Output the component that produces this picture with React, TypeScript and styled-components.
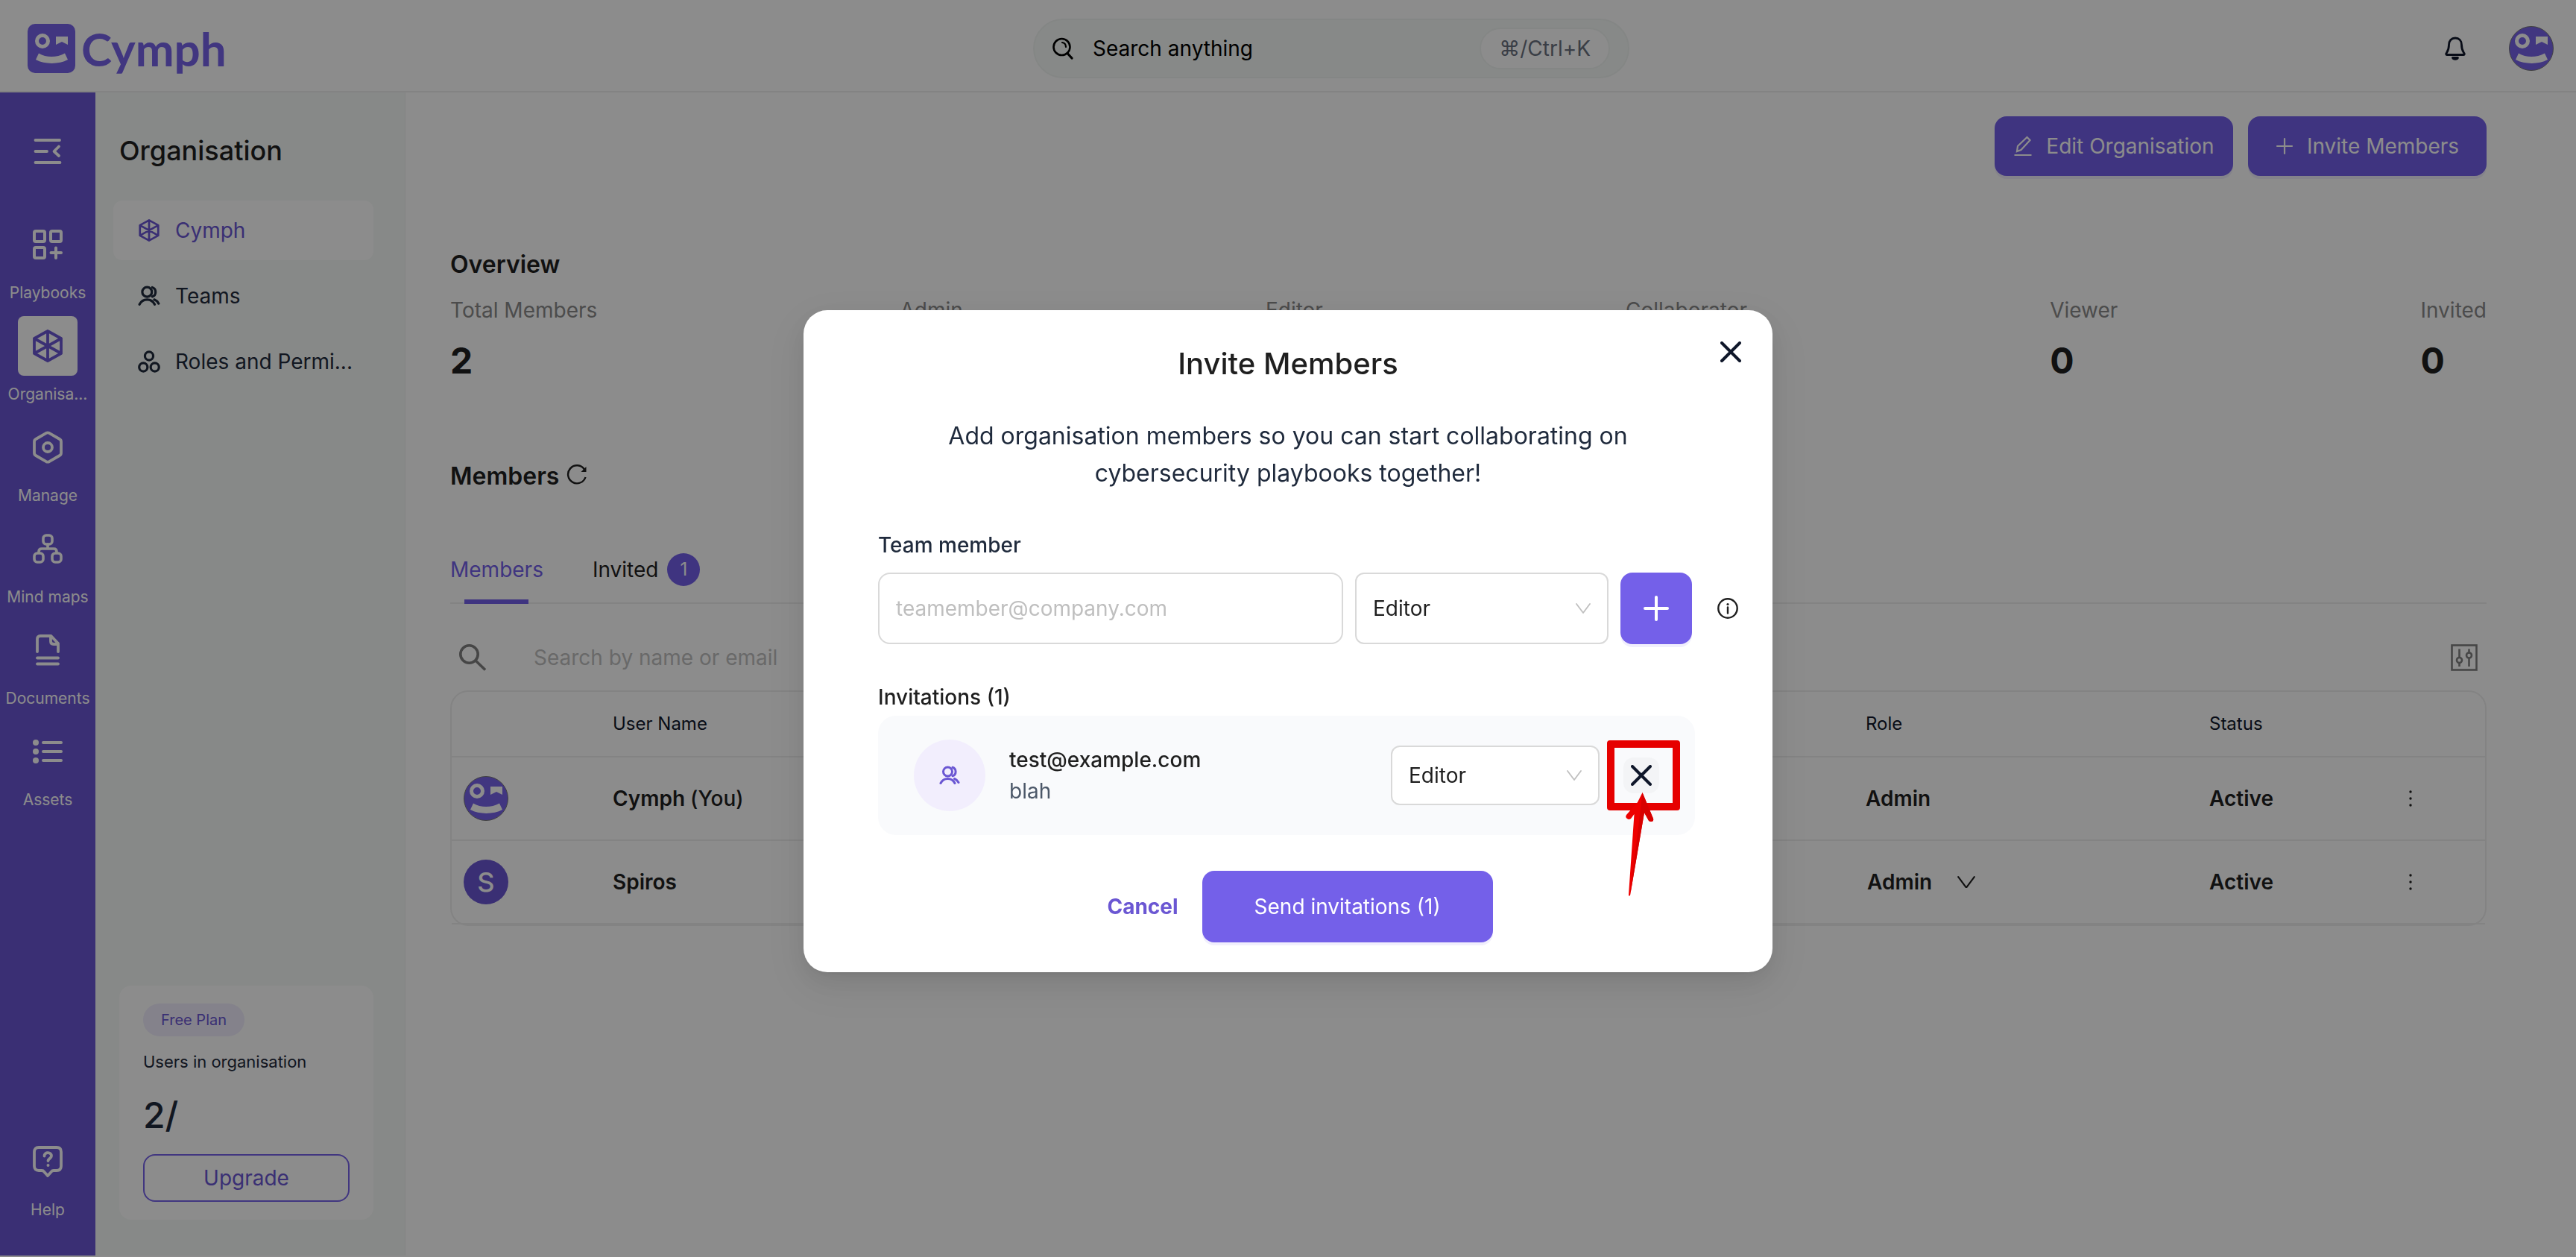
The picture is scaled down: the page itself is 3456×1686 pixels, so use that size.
import React from "react";
import styled, { createGlobalStyle } from "styled-components";

const color = {
  primary: "#7460e9",
  logo: "#7763e9",
  rail: "#6b57d3",
  ink: "#1f1f1f",
  navy: "#1f2a3c",
  deep: "#0f172a",
  muted: "#8a8a8a",
  line: "#efefef",
  field: "#d9d9d9",
  panel: "#f6faf7",
};

const GlobalStyle = createGlobalStyle`
  *, *::before, *::after { box-sizing: border-box; }
  body { margin: 0; background: #fff; }
  body, button, input, select {
    font-family: Inter, "Liberation Sans", sans-serif;
    font-size: 28px;
    line-height: 40px;
    color: ${color.ink};
  }
  h1, h2, h3, p, dl, dd, ul { margin: 0; padding: 0; font-weight: inherit; }
  ul { list-style: none; }
  button { border: 0; padding: 0; background: none; cursor: pointer; }
  a { color: inherit; text-decoration: none; }
  svg { display: block; flex: none; }
`;

/* ---------- shell ---------- */

const Shell = styled.div`
  display: flex;
  flex-direction: column;
  min-height: 100vh;
  padding-bottom: 2px;
`;

const Header = styled.header`
  display: flex;
  align-items: center;
  justify-content: space-between;
  height: 124px;
  padding: 8px 30px 0 37px;
  border-bottom: 2px solid ${color.line};
`;

const Brand = styled.a`
  display: flex;
  align-items: center;
  gap: 8px;
  min-width: 267px;
  color: ${color.logo};
  font-family: Lato, sans-serif;
  font-size: 62px;
  font-weight: 700;
  line-height: 66px;
`;

const SearchBox = styled.button`
  display: flex;
  align-items: center;
  width: 800px;
  height: 80px;
  padding: 0 24px;
  border: 2px solid #f1f5f3;
  border-radius: 40px;
  background: ${color.panel};
  color: #000;
  text-align: left;
`;

const SearchText = styled.span`
  flex: 1;
  padding-left: 26px;
`;

const Shortcut = styled.kbd`
  display: flex;
  align-items: center;
  height: 56px;
  padding: 0 24px;
  border: 2px solid #f1f5f3;
  border-radius: 28px;
  background: #fff;
  color: #6b7280;
  font-family: inherit;
`;

const HeaderTools = styled.div`
  display: flex;
  align-items: center;
  gap: 46px;
`;

const BellButton = styled.button`
  display: grid;
  place-items: center;
  width: 52px;
  height: 60px;
`;

const Body = styled.div`
  display: flex;
  flex: 1;
`;

/* ---------- rail ---------- */

const Rail = styled.nav`
  display: flex;
  flex-direction: column;
  align-items: center;
  width: 128px;
  padding: 39px 0 30px;
  background: ${color.rail};
  color: #fff;
`;

const RailToggle = styled.button`
  display: grid;
  place-items: center;
  width: 80px;
  height: 80px;
  margin-bottom: 45px;
  color: #fff;
`;

const RailLink = styled.a<{ $last?: boolean }>`
  display: flex;
  flex-direction: column;
  align-items: center;
  height: 136px;
  margin-top: ${(p) => (p.$last ? "auto" : 0)};
  font-size: 21px;
  line-height: 50px;
  white-space: nowrap;
`;

const RailIcon = styled.span<{ $active?: boolean }>`
  display: grid;
  place-items: center;
  width: 80px;
  height: 80px;
  border-radius: 8px;
  background: ${(p) => (p.$active ? "#fff" : "transparent")};
  color: ${(p) => (p.$active ? color.rail : "#fff")};
`;

/* ---------- side panel ---------- */

const Panel = styled.aside`
  display: flex;
  flex-direction: column;
  width: 416px;
  padding: 54px 42px 48px 24px;
  border-right: 1px solid #f0f0f0;
  background: ${color.panel};
`;

const PanelTitle = styled.h1`
  padding-left: 8px;
  margin-bottom: 43px;
  font-size: 36px;
  font-weight: 500;
  line-height: 48px;
`;

const PanelMenu = styled.ul`
  display: flex;
  flex-direction: column;
  gap: 8px;
`;

const PanelLink = styled.a<{ $active?: boolean }>`
  display: flex;
  align-items: center;
  gap: 20px;
  height: 80px;
  padding: 0 0 0 33px;
  border-radius: 12px;
  background: ${(p) => (p.$active ? "#fff" : "transparent")};
  color: ${(p) => (p.$active ? color.rail : color.navy)};
  white-space: nowrap;
`;

const PlanCard = styled.section`
  display: flex;
  flex-direction: column;
  align-items: flex-start;
  margin: auto 0 0 8px;
  padding: 24px 32px;
  border-radius: 16px;
  background: #fff;
  color: ${color.navy};
`;

const PlanBadge = styled.span`
  padding: 0 24px;
  border-radius: 22px;
  background: #f0edfd;
  color: ${color.rail};
  font-size: 20px;
  line-height: 44px;
`;

const PlanText = styled.p`
  margin-top: 14px;
  font-size: 22px;
`;

const PlanCount = styled.p`
  margin: 22px 0;
  font-size: 48px;
  font-weight: 500;
  line-height: 60px;
`;

const UpgradeButton = styled.button`
  width: 100%;
  height: 64px;
  border: 2px solid ${color.logo};
  border-radius: 16px;
  color: ${color.rail};
`;

/* ---------- main ---------- */

const Main = styled.main`
  flex: 1;
  padding: 32px 120px 0 60px;
`;

const Actions = styled.div`
  display: flex;
  justify-content: flex-end;
  gap: 20px;
`;

const PrimaryButton = styled.button<{ $width: number; $height: number }>`
  display: flex;
  align-items: center;
  justify-content: center;
  gap: 18px;
  width: ${(p) => p.$width}px;
  height: ${(p) => p.$height}px;
  border-radius: 16px;
  background: ${color.primary};
  box-shadow: 0 4px 0 rgba(116, 96, 233, 0.1);
  color: #fff;
  white-space: nowrap;
`;

const SectionTitle = styled.h2`
  display: flex;
  align-items: center;
  gap: 10px;
  font-size: 32px;
  font-weight: 600;
`;

const Overview = styled.section`
  margin-top: 99px;
`;

const Stats = styled.dl`
  display: flex;
  justify-content: space-between;
  margin-top: 21px;
`;

const StatLabel = styled.dt`
  color: ${color.muted};
`;

const StatValue = styled.dd`
  margin-top: 18px;
  font-size: 48px;
  font-weight: 700;
  line-height: 60px;
`;

const Members = styled.section`
  margin-top: 105px;
`;

const Tabs = styled.div`
  display: flex;
  gap: 66px;
  margin-top: 83px;
  box-shadow: inset 0 -2px 0 ${color.line};
`;

const Tab = styled.button<{ $active?: boolean }>`
  display: flex;
  flex-direction: column;
  align-items: center;
  gap: 18px;
  color: ${(p) => (p.$active ? color.primary : color.ink)};
  &::after {
    content: "";
    width: 86px;
    height: 6px;
    background: ${(p) => (p.$active ? color.primary : "transparent")};
  }
`;

const TabLabel = styled.span`
  display: flex;
  align-items: center;
  gap: 12px;
  height: 44px;
`;

const TabCount = styled.span`
  width: 44px;
  border-radius: 22px;
  background: ${color.primary};
  color: #fff;
  font-size: 24px;
  line-height: 44px;
`;

const Toolbar = styled.div`
  display: flex;
  align-items: center;
  margin-top: 52px;
  padding: 0 12px;
  color: #808080;
`;

const TableSearch = styled.input`
  flex: 1;
  height: 40px;
  padding: 0;
  margin: 0 64px;
  border: 0;
  background: none;
  &::placeholder { color: #bfbfbf; opacity: 1; }
`;

const IconButton = styled.button`
  color: inherit;
`;

const TableFrame = styled.div`
  margin-top: 24px;
  border: 2px solid ${color.line};
  border-radius: 24px;
`;

const Table = styled.table`
  width: 100%;
  table-layout: fixed;
  border-collapse: separate;
  border-spacing: 0;
`;

const Col = styled.col<{ $width?: number }>`
  width: ${(p) => (p.$width ? `${p.$width}px` : "auto")};
`;

const HeadCell = styled.th`
  height: 88px;
  padding: 0 16px;
  border-bottom: 2px solid ${color.line};
  color: ${color.deep};
  font-size: 24px;
  font-weight: 400;
  text-align: left;
`;

const Cell = styled.td`
  height: 112px;
  padding: 0 16px;
  border-bottom: 2px solid ${color.line};
  font-weight: 600;
`;

const Light = styled.span`
  font-weight: 500;
`;

const RoleMenu = styled.button`
  display: flex;
  align-items: center;
  gap: 34px;
  padding-left: 2px;
  font-weight: 600;
`;

const MoreButton = styled.button`
  display: block;
  margin: 0 auto;
`;

const Initial = styled.span`
  display: block;
  width: 60px;
  border-radius: 50%;
  background: ${color.rail};
  color: #fff;
  font-size: 36px;
  font-weight: 500;
  line-height: 60px;
  text-align: center;
`;

/* ---------- dialog ---------- */

const Backdrop = styled.div`
  position: fixed;
  inset: 0;
  display: flex;
  justify-content: center;
  align-items: flex-start;
  padding-top: 416px;
  background: rgba(0, 0, 0, 0.45);
`;

const Dialog = styled.div`
  position: relative;
  width: 1300px;
  max-width: 100%;
  padding: 48px 46px 40px 100px;
  border-radius: 32px;
  background: #fff;
  box-shadow: 0 12px 32px rgba(0, 0, 0, 0.08), 0 6px 12px -8px rgba(0, 0, 0, 0.12),
    0 18px 56px 16px rgba(0, 0, 0, 0.05);
`;

const DialogClose = styled.button`
  position: absolute;
  top: 42px;
  right: 42px;
`;

const DialogIntro = styled.div`
  padding-right: 54px;
  text-align: center;
`;

const DialogTitle = styled.h2`
  font-size: 40px;
  font-weight: 500;
  line-height: 48px;
`;

const DialogText = styled.p`
  max-width: 940px;
  margin: 48px auto 51px;
  color: ${color.navy};
  font-size: 32px;
  line-height: 50px;
`;

const FieldLabel = styled.label`
  display: block;
  margin-bottom: 17px;
  color: ${color.navy};
  font-weight: 500;
`;

const InviteRow = styled.div`
  display: flex;
  align-items: center;
  gap: 16px;
`;

const EmailInput = styled.input`
  flex: 1;
  min-width: 0;
  height: 96px;
  padding: 0 22px;
  border: 2px solid ${color.field};
  border-radius: 16px;
  &::placeholder { color: #bfbfbf; opacity: 1; }
`;

const SelectBox = styled.span<{ $width: number; $height: number }>`
  display: grid;
  align-items: center;
  width: ${(p) => p.$width}px;
  height: ${(p) => p.$height}px;
  & > * { grid-area: 1 / 1; }
  & > svg { justify-self: end; margin-right: 24px; pointer-events: none; }
`;

const Select = styled.select`
  width: 100%;
  height: 100%;
  padding: 0 22px;
  border: 2px solid ${color.field};
  border-radius: 12px;
  background: #fff;
  appearance: none;
`;

const InfoButton = styled.button`
  margin-left: 18px;
`;

const ListTitle = styled.h3`
  margin: 51px 0 5px;
  font-size: 28px;
  font-weight: 500;
`;

const InviteItem = styled.li`
  display: flex;
  align-items: center;
  margin-right: 58px;
  padding: 32px 48px;
  border-radius: 24px;
  background: #f9fafc;
`;

const InviteAvatar = styled.span`
  display: grid;
  place-items: center;
  width: 96px;
  height: 96px;
  border-radius: 50%;
  background: #f2eefd;
  color: ${color.rail};
`;

const InviteInfo = styled.div`
  flex: 1;
  padding-left: 32px;
  line-height: 42px;
`;

const InviteEmail = styled.p`
  font-weight: 500;
`;

const InviteNote = styled.p`
  color: #4b5768;
`;

const RemoveWrap = styled.span`
  position: relative;
  margin-left: 32px;
`;

const RemoveButton = styled.button`
  display: grid;
  place-items: center;
  width: 48px;
  height: 48px;
  border-radius: 14px;
  background: #f3f4f6;
`;

const Highlight = styled.span`
  position: absolute;
  inset: -23px -28px -23px -22px;
  border: 10px solid #e60000;
  border-radius: 4px;
  pointer-events: none;
`;

const Pointer = styled.svg`
  position: absolute;
  left: 2px;
  top: 46px;
  pointer-events: none;
`;

const DialogFooter = styled.div`
  display: flex;
  justify-content: center;
  align-items: center;
  gap: 32px;
  margin-top: 48px;
  padding-right: 22px;
`;

const CancelButton = styled.button`
  color: ${color.rail};
  font-weight: 700;
`;

/* ---------- drawings ---------- */

const stroke = {
  fill: "none",
  stroke: "currentColor",
  strokeLinecap: "round" as const,
  strokeLinejoin: "round" as const,
};

const Face = () => (
  <g fill="#fff">
    <path
      fillRule="evenodd"
      d="M20 13a10 10 0 1 1 0 20 10 10 0 0 1 0-20zm0 5a5 5 0 1 0 0 10 5 5 0 0 0 0-10z"
    />
    <path d="M38 17h16v11l-8-4-8 4z" />
    <path d="M15 39.500C25 45.500 39 45.500 50 39.500L54 48C42 54.500 23 54.500 11 48z" />
  </g>
);

const LogoMark = () => (
  <svg width="64" height="66" viewBox="0 0 64 66">
    <rect width="64" height="66" rx="10" fill={color.logo} />
    <Face />
  </svg>
);

const FaceAvatar = () => (
  <svg width="60" height="60" viewBox="0 0 60 60">
    <circle cx="30" cy="30" r="29.500" fill={color.logo} stroke="#777" />
    <g transform="translate(-2 -3)">
      <Face />
    </g>
  </svg>
);

const SearchGlossIcon = () => (
  <svg width="28" height="30" viewBox="0 0 28 30" {...stroke} strokeWidth="2.600">
    <circle cx="12.500" cy="13" r="11" />
    <path d="M20.500 22l5.500 6" strokeWidth="3.200" />
    <path d="M13 7c3 .5 5 3 5 6" strokeWidth="2.200" />
  </svg>
);

const BellIcon = () => (
  <svg width="28" height="32" viewBox="0 0 28 32" {...stroke} stroke={color.deep} strokeWidth="2.800">
    <path d="M14 2C9 2 5.500 5.500 5.500 11c0 7-1.500 8.500-3.500 11.500-.6 1.200 0 2 1 2h22c1 0 1.600-.8 1-2-2-3-3.500-4.500-3.500-11.500C22.500 5.500 19 2 14 2z" />
    <path d="M10.500 28.500c1 2.500 6 2.500 7 0z" fill={color.deep} />
  </svg>
);

const FoldIcon = () => (
  <svg width="38" height="36" viewBox="0 0 38 36" {...stroke} strokeWidth="3.800">
    <path d="M2.500 3H35M2.500 18H18M2.500 33H35.500M34 11.500L27.500 18l6.500 6" />
  </svg>
);

const PlaybooksIcon = () => (
  <svg width="40" height="40" viewBox="0 0 40 40" {...stroke} strokeWidth="4">
    <rect x="2" y="2" width="14" height="14" rx="2" />
    <rect x="24" y="2" width="14" height="14" rx="2" />
    <rect x="2" y="24" width="14" height="14" rx="2" />
    <path d="M31 24.500v13.500M24.500 31H38" />
  </svg>
);

const HexagonIcon = ({ size = 44, weight = 3.8 }: { size?: number; weight?: number }) => (
  <svg width={size} height={size} viewBox="0 0 44 44" {...stroke} strokeWidth={weight}>
    <path d="M22 2l18 10v20L22 42 4 32V12zM22 2v40M4 12l36 20M40 12L4 32" />
  </svg>
);

const ManageIcon = () => (
  <svg width="40" height="44" viewBox="0 0 40 44" {...stroke} strokeWidth="3.800">
    <path d="M18 2.800q2-1 4 0L36 11q2 1 2 3.500v15q0 2.500-2 3.500L22 41.200q-2 1-4 0L4 33q-2-1-2-3.500v-15Q2 12 4 11z" />
    <circle cx="20" cy="22" r="6" />
  </svg>
);

const MindMapIcon = () => (
  <svg width="40" height="40" viewBox="0 0 40 40" {...stroke} strokeWidth="3.600">
    <rect x="14" y="2" width="12" height="12" rx="4" />
    <rect x="2" y="26" width="12" height="12" rx="4" />
    <rect x="26" y="26" width="12" height="12" rx="4" />
    <path d="M20 14v6M8 25v-1q0-4 4-4h16q4 0 4 4v1" />
  </svg>
);

const DocumentIcon = () => (
  <svg width="34" height="42" viewBox="0 0 34 42" {...stroke} strokeWidth="3.800">
    <path d="M3 23V6q0-4 4-4h14.500L31 12v11M21 3v6q0 4 4 4h6M3 31.500h28M3 39.500h28" />
  </svg>
);

const ListIcon = () => (
  <svg width="40" height="34" viewBox="0 0 40 34" {...stroke} strokeWidth="4">
    <path d="M14 5h24M14 17h24M14 29h24" />
    <g fill="currentColor" stroke="none">
      <circle cx="4" cy="5" r="4" />
      <circle cx="4" cy="17" r="4" />
      <circle cx="4" cy="29" r="4" />
    </g>
  </svg>
);

const HelpIcon = () => (
  <svg width="40" height="42" viewBox="0 0 40 42" {...stroke} strokeWidth="3.800">
    <path d="M8 2h24q6 0 6 6v19q0 6-6 6h-4q-2 0-3 1.500L20 40l-5-5.500Q14 33 12 33H8q-6 0-6-6V8q0-6 6-6z" />
    <path d="M15.500 13.500c0-6 9.500-5.500 9.500 0 0 3-4.500 4-4.500 6.500" />
    <circle cx="20.500" cy="26" r="1.200" fill="currentColor" strokeWidth="1.600" />
  </svg>
);

const TeamIcon = ({ size = 28 }: { size?: number }) => (
  <svg width={size} height={size} viewBox="0 0 28 28" {...stroke} strokeWidth="3">
    <circle cx="11.500" cy="9" r="6" />
    <path d="M2 24.500c4-8 15-8 19 0M18 3.200c5.500 1.800 5.500 9.800 0 11.600M20.500 18.500c3 1.200 4.500 3 5.500 5" />
  </svg>
);

const RolesIcon = () => (
  <svg width="30" height="30" viewBox="0 0 28 28" {...stroke} strokeWidth="3">
    <circle cx="14" cy="7" r="5.200" />
    <circle cx="6.800" cy="21" r="5.200" />
    <circle cx="21.200" cy="21" r="5.200" />
  </svg>
);

const EditIcon = () => (
  <svg width="26" height="28" viewBox="0 0 26 28" {...stroke} strokeWidth="2.200">
    <path d="M1.500 26h23M5 21l1-7L18.500 2l4 4L10.500 19z" strokeLinejoin="miter" strokeLinecap="butt" />
  </svg>
);

const PlusIcon = ({ size = 24, weight = 2.2 }: { size?: number; weight?: number }) => (
  <svg width={size} height={size} viewBox={`0 0 ${size} ${size}`} {...stroke} strokeWidth={weight}>
    <path d={`M${size / 2} 2V${size - 2}M2 ${size / 2}H${size - 2}`} />
  </svg>
);

const ReloadIcon = () => (
  <svg width="28" height="32" viewBox="0 0 28 32" {...stroke} strokeWidth="2.400" strokeLinecap="butt">
    <path d="M25.500 17A12 12 0 1 1 24 6.500" />
    <path d="M26.500 3v7h-7z" fill="currentColor" stroke="none" />
  </svg>
);

const SearchIcon = () => (
  <svg width="36" height="36" viewBox="0 0 36 36" {...stroke} strokeWidth="3.600" strokeLinecap="butt">
    <circle cx="13.500" cy="13.500" r="11.700" />
    <path d="M22 22l13 12.500" />
  </svg>
);

const FilterIcon = () => (
  <svg width="36" height="36" viewBox="0 0 36 36" {...stroke} strokeWidth="2.600" strokeLinecap="butt">
    <rect x="1.500" y="1.500" width="33" height="33" strokeLinejoin="miter" />
    <path d="M11.500 6.500v11M11.500 25v5M24.500 6.500v5M24.500 19v11" />
    <circle cx="11.500" cy="21.500" r="3.500" />
    <circle cx="24.500" cy="15" r="3.500" />
  </svg>
);

const ChevronIcon = ({ width = 20, tone = "#bfbfbf" }: { width?: number; tone?: string }) => (
  <svg width={width} height={(width * 7) / 10} viewBox="0 0 20 14" {...stroke} stroke={tone} strokeWidth="1.800">
    <path d="M1 1l9 12 9-12" />
  </svg>
);

const DotsIcon = () => (
  <svg width="24" height="24" viewBox="0 0 24 24" fill={color.ink}>
    <circle cx="12" cy="3" r="1.700" />
    <circle cx="12" cy="12" r="1.700" />
    <circle cx="12" cy="21" r="1.700" />
  </svg>
);

const CrossIcon = () => (
  <svg width="28" height="28" viewBox="0 0 28 28" {...stroke} stroke={color.deep} strokeWidth="4">
    <path d="M2 2l24 24M26 2L2 26" />
  </svg>
);

const InfoIcon = () => (
  <svg width="28" height="28" viewBox="0 0 28 28" {...stroke} strokeWidth="2.400">
    <circle cx="14" cy="14" r="12.700" />
    <path d="M14 12.500v8" />
    <circle cx="14" cy="8.500" r="1.600" fill="currentColor" stroke="none" />
  </svg>
);

const RedArrow = () => (
  <Pointer width="40" height="144" viewBox="0 0 40 144">
    <path
      d="M23.500 1L38 36q1 4-3 4-3 0-4-3l-5-9L7 139q-2 2-2-1L12.500 30 8 36q-3 2-5 0-3-2-1-5L17 14z"
      fill="#ee0000"
    />
    <path d="M23.500 1L38 36q1 4-3 4-3 0-4-3l-5-9L7 139z" fill="#d80000" />
  </Pointer>
);

/* ---------- data ---------- */

const railLinks = [
  { label: "Playbooks", icon: <PlaybooksIcon /> },
  { label: "Organisa...", icon: <HexagonIcon />, active: true },
  { label: "Manage", icon: <ManageIcon /> },
  { label: "Mind maps", icon: <MindMapIcon /> },
  { label: "Documents", icon: <DocumentIcon /> },
  { label: "Assets", icon: <ListIcon /> },
];

const panelLinks = [
  { label: "Cymph", icon: <HexagonIcon size={30} weight={4} />, active: true },
  { label: "Teams", icon: <TeamIcon size={30} /> },
  { label: "Roles and Permi...", icon: <RolesIcon /> },
];

const stats: { label: string; value?: number }[] = [
  { label: "Total Members", value: 2 },
  { label: "Admin" },
  { label: "Editor" },
  { label: "Collaborator" },
  { label: "Viewer", value: 0 },
  { label: "Invited", value: 0 },
];

const RoleSelect = ({ label, width, height }: { label: string; width: number; height: number }) => (
  <SelectBox $width={width} $height={height}>
    <Select aria-label={label} defaultValue="Editor">
      <option>Editor</option>
    </Select>
    <ChevronIcon />
  </SelectBox>
);

export default function App() {
  return (
    <>
      <GlobalStyle />
      <Shell>
        <Header>
          <Brand href="#">
            <LogoMark />
            Cymph
          </Brand>
          <SearchBox>
            <SearchGlossIcon />
            <SearchText>Search anything</SearchText>
            <Shortcut>⌘/Ctrl+K</Shortcut>
          </SearchBox>
          <HeaderTools>
            <BellButton aria-label="Notifications">
              <BellIcon />
            </BellButton>
            <IconButton aria-label="Account">
              <FaceAvatar />
            </IconButton>
          </HeaderTools>
        </Header>
        <Body>
          <Rail>
            <RailToggle aria-label="Collapse menu">
              <FoldIcon />
            </RailToggle>
            {railLinks.map((l) => (
              <RailLink href="#" key={l.label}>
                <RailIcon $active={l.active}>{l.icon}</RailIcon>
                {l.label}
              </RailLink>
            ))}
            <RailLink href="#" $last>
              <RailIcon>
                <HelpIcon />
              </RailIcon>
              Help
            </RailLink>
          </Rail>
          <Panel>
            <PanelTitle>Organisation</PanelTitle>
            <PanelMenu>
              {panelLinks.map((l) => (
                <li key={l.label}>
                  <PanelLink href="#" $active={l.active}>
                    {l.icon}
                    {l.label}
                  </PanelLink>
                </li>
              ))}
            </PanelMenu>
            <PlanCard>
              <PlanBadge>Free Plan</PlanBadge>
              <PlanText>Users in organisation</PlanText>
              <PlanCount>2/</PlanCount>
              <UpgradeButton>Upgrade</UpgradeButton>
            </PlanCard>
          </Panel>
          <Main>
            <Actions>
              <PrimaryButton $width={320} $height={80}>
                <EditIcon />
                Edit Organisation
              </PrimaryButton>
              <PrimaryButton $width={320} $height={80}>
                <PlusIcon />
                Invite Members
              </PrimaryButton>
            </Actions>
            <Overview>
              <SectionTitle>Overview</SectionTitle>
              <Stats>
                {stats.map((s) => (
                  <div key={s.label}>
                    <StatLabel>{s.label}</StatLabel>
                    {s.value !== undefined && <StatValue>{s.value}</StatValue>}
                  </div>
                ))}
              </Stats>
            </Overview>
            <Members>
              <SectionTitle>
                Members
                <IconButton aria-label="Reload members">
                  <ReloadIcon />
                </IconButton>
              </SectionTitle>
              <Tabs role="tablist">
                <Tab role="tab" aria-selected $active>
                  <TabLabel>Members</TabLabel>
                </Tab>
                <Tab role="tab">
                  <TabLabel>
                    Invited <TabCount>1</TabCount>
                  </TabLabel>
                </Tab>
              </Tabs>
              <Toolbar>
                <SearchIcon />
                <TableSearch aria-label="Search members" placeholder="Search by name or email" />
                <IconButton aria-label="Filters">
                  <FilterIcon />
                </IconButton>
              </Toolbar>
              <TableFrame>
                <Table>
                  <colgroup>
                    <Col $width={200} />
                    <Col />
                    <Col $width={461} />
                    <Col $width={186} />
                    <Col $width={200} />
                  </colgroup>
                  <thead>
                    <tr>
                      <HeadCell />
                      <HeadCell>User Name</HeadCell>
                      <HeadCell>Role</HeadCell>
                      <HeadCell>Status</HeadCell>
                      <HeadCell />
                    </tr>
                  </thead>
                  <tbody>
                    <tr>
                      <Cell>
                        <FaceAvatar />
                      </Cell>
                      <Cell>
                        Cymph <Light>(You)</Light>
                      </Cell>
                      <Cell>Admin</Cell>
                      <Cell>Active</Cell>
                      <Cell>
                        <MoreButton aria-label="More actions for Cymph">
                          <DotsIcon />
                        </MoreButton>
                      </Cell>
                    </tr>
                    <tr>
                      <Cell>
                        <Initial>S</Initial>
                      </Cell>
                      <Cell>Spiros</Cell>
                      <Cell>
                        <RoleMenu>
                          Admin
                          <ChevronIcon width={24} tone={color.ink} />
                        </RoleMenu>
                      </Cell>
                      <Cell>Active</Cell>
                      <Cell>
                        <MoreButton aria-label="More actions for Spiros">
                          <DotsIcon />
                        </MoreButton>
                      </Cell>
                    </tr>
                  </tbody>
                </Table>
              </TableFrame>
            </Members>
          </Main>
        </Body>
      </Shell>
      <Backdrop>
        <Dialog role="dialog" aria-modal aria-labelledby="invite-title">
          <DialogClose aria-label="Close">
            <CrossIcon />
          </DialogClose>
          <DialogIntro>
            <DialogTitle id="invite-title">Invite Members</DialogTitle>
            <DialogText>
              Add organisation members so you can start collaborating on cybersecurity playbooks together!
            </DialogText>
          </DialogIntro>
          <FieldLabel htmlFor="invite-email">Team member</FieldLabel>
          <InviteRow>
            <EmailInput id="invite-email" type="email" placeholder="teamember@company.com" />
            <RoleSelect label="Role" width={340} height={96} />
            <PrimaryButton $width={96} $height={96} aria-label="Add member">
              <PlusIcon size={34} weight={4} />
            </PrimaryButton>
            <InfoButton aria-label="About roles">
              <InfoIcon />
            </InfoButton>
          </InviteRow>
          <ListTitle>Invitations (1)</ListTitle>
          <ul>
            <InviteItem>
              <InviteAvatar>
                <TeamIcon />
              </InviteAvatar>
              <InviteInfo>
                <InviteEmail>test@example.com</InviteEmail>
                <InviteNote>blah</InviteNote>
              </InviteInfo>
              <RoleSelect label="Role of test@example.com" width={280} height={80} />
              <RemoveWrap>
                <RemoveButton aria-label="Remove invitation">
                  <CrossIcon />
                </RemoveButton>
                <Highlight />
                <RedArrow />
              </RemoveWrap>
            </InviteItem>
          </ul>
          <DialogFooter>
            <CancelButton>Cancel</CancelButton>
            <PrimaryButton $width={390} $height={96}>
              Send invitations (1)
            </PrimaryButton>
          </DialogFooter>
        </Dialog>
      </Backdrop>
    </>
  );
}
